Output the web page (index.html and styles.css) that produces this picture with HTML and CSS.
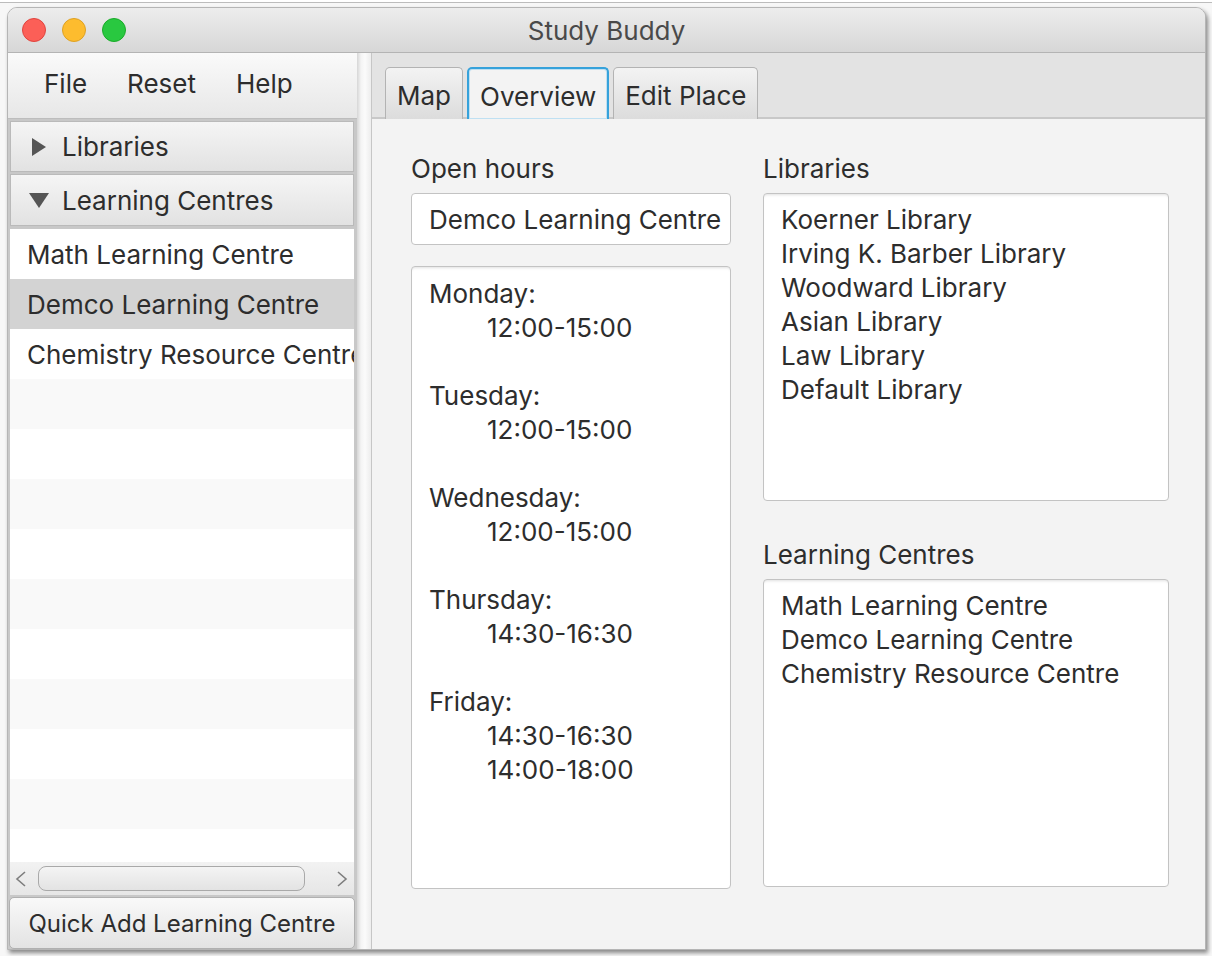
FILE: index.html
```html
<!DOCTYPE html>
<html>
<head>
<meta charset="utf-8">
<link rel="stylesheet" href="styles.css">
</head>
<body>
<div class="desk">
  <div class="window">
    <div class="titlebar">
      <div class="lights">
        <span class="light red"></span>
        <span class="light yellow"></span>
        <span class="light green"></span>
      </div>
      <div class="title">Study Buddy</div>
      <div></div>
    </div>
    <div class="main">
      <div class="leftpane">
        <div class="menubar">
          <span class="menu">File</span>
          <span class="menu">Reset</span>
          <span class="menu">Help</span>
        </div>
        <div class="tp">
          <svg class="arrow-r" width="14" height="18" viewBox="0 0 14 18"><polygon points="0,0 14,9 0,18" fill="#555"/></svg>
          <span>Libraries</span>
        </div>
        <div class="tp tp2">
          <svg class="arrow-d" width="20" height="15" viewBox="0 0 20 15"><polygon points="0,0 20,0 10,15" fill="#555"/></svg>
          <span>Learning Centres</span>
        </div>
        <div class="list">
          <div class="row">Math Learning Centre</div>
          <div class="row sel">Demco Learning Centre</div>
          <div class="row">Chemistry Resource Centre</div>
          <div class="row odd"></div>
          <div class="row"></div>
          <div class="row odd"></div>
          <div class="row"></div>
          <div class="row odd"></div>
          <div class="row"></div>
          <div class="row odd"></div>
          <div class="row"></div>
          <div class="row odd"></div>
          <div class="row"></div>
        </div>
        <div class="hscroll">
          <svg class="chev" width="12" height="16" viewBox="0 0 12 16"><polyline points="10,1 2,8 10,15" fill="none" stroke="#7d7d7d" stroke-width="1.6"/></svg>
          <div class="thumb"></div>
          <svg class="chev chev-r" width="12" height="16" viewBox="0 0 12 16"><polyline points="2,1 10,8 2,15" fill="none" stroke="#7d7d7d" stroke-width="1.6"/></svg>
        </div>
        <div class="btn">Quick Add Learning Centre</div>
      </div>
      <div class="divider"></div>
      <div class="rightpane">
        <div class="tabs">
          <div class="tab">Map</div>
          <div class="tab active">Overview</div>
          <div class="tab">Edit Place</div>
        </div>
        <div class="content">
          <div class="col">
            <div class="label">Open hours</div>
            <div class="field">Demco Learning Centre</div>
            <div class="textarea">
              <div class="line">Monday:</div>
              <div class="line ind">12:00-15:00</div>
              <div class="line"></div>
              <div class="line">Tuesday:</div>
              <div class="line ind">12:00-15:00</div>
              <div class="line"></div>
              <div class="line">Wednesday:</div>
              <div class="line ind">12:00-15:00</div>
              <div class="line"></div>
              <div class="line">Thursday:</div>
              <div class="line ind">14:30-16:30</div>
              <div class="line"></div>
              <div class="line">Friday:</div>
              <div class="line ind">14:30-16:30</div>
              <div class="line ind">14:00-18:00</div>
            </div>
          </div>
          <div class="col">
            <div class="label">Libraries</div>
            <div class="box">
              <div class="line">Koerner Library</div>
              <div class="line">Irving K. Barber Library</div>
              <div class="line">Woodward Library</div>
              <div class="line">Asian Library</div>
              <div class="line">Law Library</div>
              <div class="line">Default Library</div>
            </div>
            <div class="label label2">Learning Centres</div>
            <div class="box">
              <div class="line">Math Learning Centre</div>
              <div class="line">Demco Learning Centre</div>
              <div class="line">Chemistry Resource Centre</div>
            </div>
          </div>
        </div>
      </div>
    </div>
  </div>
</div>
</body>
</html>
```
FILE: styles.css
```css
* { box-sizing: border-box; }
html, body { margin: 0; padding: 0; }
body {
  width: 1212px;
  height: 956px;
  overflow: hidden;
  background: #ffffff;
  font-family: Inter, "Liberation Sans", sans-serif;
  font-size: 26px;
  color: #2d2d2d;
}
.desk {
  margin-top: 2px;
  border-top: 1px solid #bcbcbc;
  padding: 4px 0 0 7px;
  height: 954px;
  background: #f7f7f7;
}
.window {
  width: 1199px;
  height: 943px;
  border: 1px solid #b5b5b5;
  border-radius: 10px 10px 0 0;
  overflow: hidden;
  display: flex;
  flex-direction: column;
  background: #f3f3f3;
  box-shadow: 2px 3px 4px rgba(0, 0, 0, 0.45);
}
.titlebar {
  height: 45px;
  flex: none;
  display: grid;
  grid-template-columns: 1fr auto 1fr;
  align-items: center;
  background: linear-gradient(#ededed, #d7d7d7);
  border-bottom: 1px solid #b4b4b4;
}
.lights { display: flex; gap: 16px; padding-left: 14px; }
.light { width: 24px; height: 24px; border-radius: 50%; display: block; }
.red { background: #fc5f57; border: 1px solid #e0443e; }
.yellow { background: #fdbc2e; border: 1px solid #dea123; }
.green { background: #29c840; border: 1px solid #1aab29; }
.title { color: #4a4a4a; }

.main { flex: 1; display: flex; min-height: 0; }

.leftpane {
  width: 349px;
  flex: none;
  display: flex;
  flex-direction: column;
  background: #c8c8c8;
}
.menubar {
  height: 66px;
  flex: none;
  display: flex;
  align-items: center;
  gap: 40px;
  padding-left: 36px;
  padding-bottom: 4px;
  background: linear-gradient(#fafafa, #e7e7e7);
  border-bottom: 1px solid #bdbdbd;
}
.tp {
  height: 51px;
  flex: none;
  margin: 2px 3px 0 2px;
  display: flex;
  align-items: center;
  border: 1px solid #bababa;
  background: linear-gradient(#f5f5f5, #e2e2e2);
  padding-left: 21px;
}
.tp span { margin-left: 16px; }
.tp2 { height: 52px; padding-left: 18px; }
.tp2 span { margin-left: 13px; }
.list {
  flex: 1;
  margin: 3px 3px 0 2px;
  background: #fff;
  overflow: hidden;
  min-height: 0;
}
.row {
  height: 50px;
  display: flex;
  align-items: center;
  padding-left: 17px;
  white-space: nowrap;
  background: #fff;
}
.row.odd { background: #f9f9f9; }
.row.sel { background: #d3d3d3; }
.hscroll {
  height: 33px;
  flex: none;
  margin: 0 3px 0 2px;
  display: flex;
  align-items: center;
  background: linear-gradient(#f2f2f2, #e6e6e6);
  padding: 0 6px 0 5px;
  gap: 11px;
}
.chev { flex: none; }
.thumb {
  flex: none;
  width: 267px;
  height: 25px;
  border: 1px solid #a9a9a9;
  border-radius: 8px;
  background: linear-gradient(#f4f4f4, #e3e3e3);
}
.chev-r { margin-left: auto; }
.btn {
  height: 52px;
  flex: none;
  margin: 2px 2px 0 1px;
  border: 1px solid #b0b0b0;
  border-radius: 5px;
  background: linear-gradient(#f9f9f9, #e3e3e3);
  display: flex;
  align-items: center;
  justify-content: center;
  white-space: nowrap;
  font-size: 24px;
}
.divider {
  width: 15px;
  flex: none;
  background: linear-gradient(to right, #d6d6d6 0, #f4f4f4 4px, #fbfbfb 8px, #efefef 13px);
  border-right: 1px solid #c6c6c6;
}
.rightpane {
  flex: 1;
  display: flex;
  flex-direction: column;
  background: #f3f3f3;
}
.tabs {
  height: 66px;
  flex: none;
  display: flex;
  align-items: flex-end;
  gap: 4px;
  padding-left: 13px;
  background: #e3e3e3;
  border-bottom: 2px solid #c8c8c8;
}
.tab {
  height: 52px;
  margin-bottom: -2px;
  padding: 4px 11px 0 11px;
  display: flex;
  align-items: center;
  border: 1px solid #b3b3b3;
  border-bottom: none;
  border-radius: 5px 5px 0 0;
  background: linear-gradient(#f3f3f3, #dcdcdc);
}
.tab.active {
  border: 2px solid #36a2db;
  border-bottom: none;
  background: #f3f3f3;
  padding: 4px 11px 0 11px;
  box-shadow: inset 0 0 0 1px #bfe0f2;
}
.content {
  flex: 1;
  display: grid;
  grid-template-columns: 320px 406px;
  column-gap: 32px;
  padding: 35px 0 0 39px;
  align-content: start;
}
.col { display: flex; flex-direction: column; }
.label { height: 30px; line-height: 30px; margin-bottom: 9px; }
.label2 { margin-top: 39px; }
.field {
  height: 52px;
  border: 1px solid #c3c3c3;
  border-radius: 4px;
  background: #fff;
  display: flex;
  align-items: center;
  padding-left: 17px;
  white-space: nowrap;
  overflow: hidden;
}
.textarea {
  margin-top: 21px;
  height: 623px;
  border: 1px solid #c3c3c3;
  border-radius: 4px;
  background: #fff;
  padding: 10px 0 0 17px;
  box-shadow: inset 0 3px 3px -2px rgba(0, 0, 0, 0.12);
}
.box {
  height: 308px;
  border: 1px solid #c3c3c3;
  border-radius: 4px;
  background: #fff;
  padding: 9px 0 0 17px;
  box-shadow: inset 0 3px 3px -2px rgba(0, 0, 0, 0.12);
}
.line { height: 34px; line-height: 34px; white-space: nowrap; }
.line.ind { padding-left: 58px; }
```
